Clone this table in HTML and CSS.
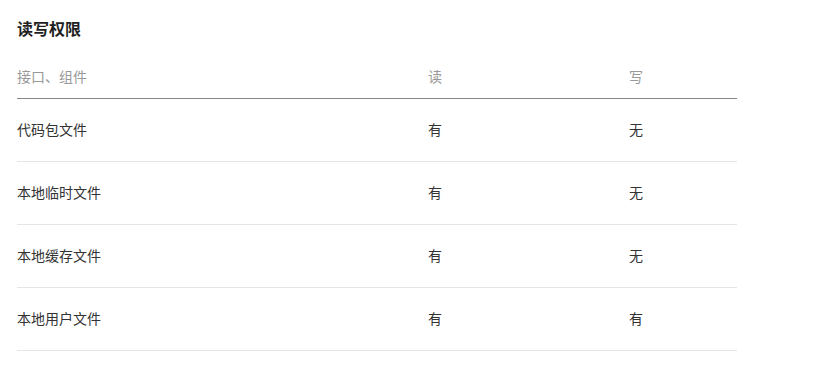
FILE: index.html
```html
<!DOCTYPE html>
<html lang="zh-CN">
<head>
<meta charset="utf-8">
<title>读写权限</title>
<link rel="stylesheet" href="styles.css">
</head>
<body>
<div class="page">
  <h2 class="title">读写权限</h2>
  <table class="perm">
    <colgroup>
      <col class="c1"><col class="c2"><col class="c3">
    </colgroup>
    <thead>
      <tr><th>接口、组件</th><th>读</th><th>写</th></tr>
    </thead>
    <tbody>
      <tr><td>代码包文件</td><td>有</td><td>无</td></tr>
      <tr><td>本地临时文件</td><td>有</td><td>无</td></tr>
      <tr><td>本地缓存文件</td><td>有</td><td>无</td></tr>
      <tr><td>本地用户文件</td><td>有</td><td>有</td></tr>
    </tbody>
  </table>
</div>
</body>
</html>
```
FILE: styles.css
```css
html, body {
  margin: 0;
  padding: 0;
  background: #fff;
}
body {
  font-family: "Noto Sans CJK SC", "Noto Sans", sans-serif;
  color: #333;
}
.page {
  padding: 17px 17px 0 17px;
}
.title {
  margin: 0 0 16px 0;
  font-size: 16px;
  line-height: 22px;
  font-weight: bold;
  color: #1f1f1f;
}
.perm {
  width: 720px;
  border-collapse: collapse;
  table-layout: fixed;
}
.c1 { width: 411px; }
.c2 { width: 201px; }
.c3 { width: 108px; }
.perm th {
  text-align: left;
  font-weight: normal;
  font-size: 14px;
  line-height: 20px;
  color: #999;
  padding: 11px 0 12px 0;
  border-bottom: 1px solid #888;
}
.perm td {
  font-size: 14px;
  line-height: 20px;
  color: #333;
  padding: 20px 0 22px 0;
  border-bottom: 1px solid #e5e5e5;
}
```
